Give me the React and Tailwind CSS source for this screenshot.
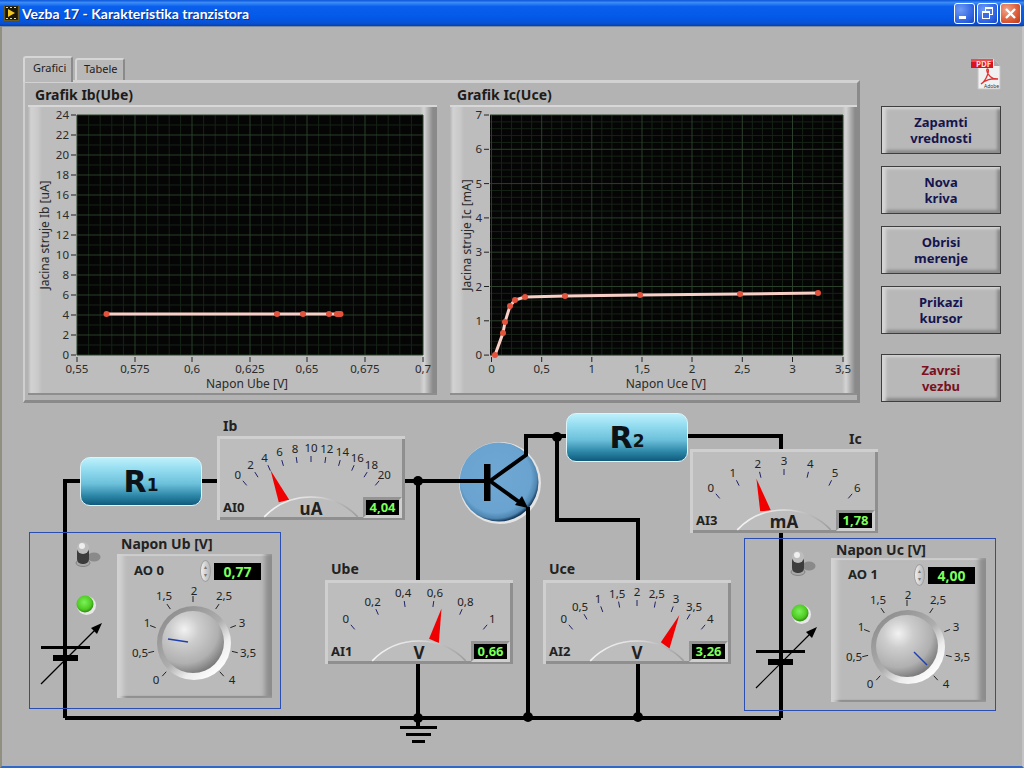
const GRID_MAJOR = "#2b402b";
const GRID_MINOR = "#172317";

const buttons = [
  { lines: ["Zapamti", "vrednosti"] },
  { lines: ["Nova", "kriva"] },
  { lines: ["Obrisi", "merenje"] },
  { lines: ["Prikazi", "kursor"] },
];

const meters = [
  { cls: "left-[215px] top-[32px]", labels: ["0", "2", "4", "6", "8", "10", "12", "14", "16", "18", "20"], angle: -23.8, unit: "uA", name: "AI0", value: "4,04", id: "m0" },
  { cls: "left-[323px] top-[176px]", labels: ["0", "0,2", "0,4", "0,6", "0,8", "1"], angle: 13, unit: "V", name: "AI1", value: "0,66", id: "m1" },
  { cls: "left-[541px] top-[176px]", labels: ["0", "0,5", "1", "1,5", "2", "2,5", "3", "3,5", "4"], angle: 25, unit: "V", name: "AI2", value: "3,26", id: "m2" },
  { cls: "left-[688px] top-[45px]", labels: ["0", "1", "2", "3", "4", "5", "6"], angle: -16, unit: "mA", name: "AI3", value: "1,78", id: "m3" },
];

const knobLabels = [
  ["0", -37, 38], ["0,5", -53, 11], ["1", -46, -19], ["1,5", -29, -46], ["2", 1, -51],
  ["2,5", 31, -46], ["3", 49, -19], ["3,5", 55, 11], ["4", 39, 38],
];

function polar(cx, cy, r, deg) {
  const a = (deg * Math.PI) / 180;
  return [cx + r * Math.sin(a), cy - r * Math.cos(a)];
}

function TitleBar() {
  return (
    <div className="h-[26px] shrink-0 flex items-center pl-[4px] pr-[3px] bg-[linear-gradient(180deg,#0a55d8_0%,#3c8cf6_10%,#0a5fec_25%,#0258e8_70%,#0a50d0_90%,#063fb0_100%)]">
      <svg width="15" height="16" viewBox="0 0 15 16" className="shrink-0">
        <rect x="0.5" y="0.5" width="14" height="15" fill="#2a2410" stroke="#6b5a20" />
        <rect x="2" y="2" width="11" height="12" fill="#1a1608" />
        <path d="M4 4 L11 8 L4 12 Z" fill="#f2c81e" />
        <path d="M2 2h2v1H2zM6 2h2v1H6zM10 2h2v1h-2zM2 13h2v1H2zM6 13h2v1H6zM10 13h2v1h-2z" fill="#d8d8c0" />
      </svg>
      <span className="ml-[3px] text-white font-bold text-[14px] font-['Lato',sans-serif] [text-shadow:1px_1px_0_#0a2f90]">
        Vezba 17 - Karakteristika tranzistora
      </span>
      <div className="ml-auto flex gap-[2px]">
        <div className="w-[21px] h-[21px] rounded-[3px] border border-white bg-[radial-gradient(circle_at_30%_30%,#6f9cf5,#2a5fe0_70%,#1c46b8)] flex items-end pl-[4px] pb-[4px]">
          <div className="w-[7px] h-[3px] bg-white" />
        </div>
        <div className="w-[21px] h-[21px] rounded-[3px] border border-white bg-[radial-gradient(circle_at_30%_30%,#6f9cf5,#2a5fe0_70%,#1c46b8)] relative">
          <div className="absolute left-[7px] top-[3px] w-[8px] h-[8px] border border-white border-t-2" />
          <div className="absolute left-[4px] top-[7px] w-[8px] h-[8px] border border-white border-t-2 bg-[#3a6ce4]" />
        </div>
        <div className="w-[21px] h-[21px] rounded-[3px] border border-white bg-[radial-gradient(circle_at_30%_30%,#f0a48a,#dc5a36_60%,#b83a1a)] flex items-center justify-center">
          <svg width="13" height="13" viewBox="0 0 13 13">
            <path d="M2 2 L11 11 M11 2 L2 11" stroke="#fff" strokeWidth="2.4" />
          </svg>
        </div>
      </div>
    </div>
  );
}

function Graph({ title, ylabel, xlabel, box, plot, xTicks, yTicks, minorX, minorY, points, cx, width }) {
  const [px0, py0, px1, py1] = plot;
  const vLines = [];
  const hLines = [];
  for (let i = 0; i < xTicks.length - 1; i++) {
    for (let j = 1; j < minorX; j++) {
      vLines.push(xTicks[i][1] + ((xTicks[i + 1][1] - xTicks[i][1]) * j) / minorX);
    }
  }
  for (let i = 0; i < yTicks.length - 1; i++) {
    for (let j = 1; j < minorY; j++) {
      hLines.push(yTicks[i][1] + ((yTicks[i + 1][1] - yTicks[i][1]) * j) / minorY);
    }
  }
  return (
    <div className={"flex flex-col shrink-0 " + width}>
      <div className="h-[22px] flex items-center pl-[7px] pt-[2px] text-[14px] font-bold text-[#1c1c1c] leading-none">{title}</div>
      <div className="h-[290px] overflow-hidden bg-[linear-gradient(90deg,#b4b4b4_0,#d2d2d2_3px,#c9c9c9_10px,#bdbdbd_14px,#bdbdbd_392px,#d4d4d4_396px,#8a8a8a_405px,#8a8a8a_409px)] border-t-2 border-t-[#d8d8d8] border-b-2 border-b-[#8e8e8e]">
        <svg width="409" height="286" viewBox={box} className="block">
          <rect x={px0} y={py0} width={px1 - px0} height={py1 - py0} fill="#050505" />
          {vLines.map((x, i) => <line key={i} x1={x} x2={x} y1={py0} y2={py1} stroke={GRID_MINOR} />)}
          {hLines.map((y, i) => <line key={i} x1={px0} x2={px1} y1={y} y2={y} stroke={GRID_MINOR} />)}
          {xTicks.map(([label, x]) => (
            <g key={label}>
              <line x1={x} x2={x} y1={py0} y2={py1} stroke={GRID_MAJOR} />
              <line x1={x} x2={x} y1={py1 + 2} y2={py1 + 7} stroke="#222" />
              <text x={x} y={py1 + 18} textAnchor="middle" fontSize="11.5" fill="#2a2a2a">{label}</text>
            </g>
          ))}
          {yTicks.map(([label, y]) => (
            <g key={label}>
              <line x1={px0} x2={px1} y1={y} y2={y} stroke={GRID_MAJOR} />
              <line x1={px0 - 6} x2={px0 - 1} y1={y} y2={y} stroke="#222" />
              <text x={px0 - 8} y={y + 4} textAnchor="end" fontSize="11.5" fill="#2a2a2a">{label}</text>
            </g>
          ))}
          <text x={cx} y={py1 + 33} textAnchor="middle" fontSize="12" fill="#2a2a2a">{xlabel}</text>
          <text transform={`translate(${box.split(" ")[0] * 1 + 21} 235) rotate(-90)`} textAnchor="middle" fontSize="12" fill="#2a2a2a">{ylabel}</text>
          <polyline points={points.map((p) => p.join(",")).join(" ")} fill="none" stroke="#f8cfc6" strokeWidth="3" />
          {points.map(([x, y], i) => <circle key={i} cx={x} cy={y} r="3" fill="#e2523c" />)}
        </svg>
      </div>
    </div>
  );
}

function Meter({ cls, labels, angle, unit, name, value, id }) {
  const cx = 94;
  const cy = 126;
  const n = labels.length - 1;
  const [tx, ty] = polar(cx, cy, 100, angle);
  const [b1x, b1y] = polar(cx, cy, 68, angle - 4.5);
  const [b2x, b2y] = polar(cx, cy, 66, angle + 4.5);
  const [ax, ay] = polar(cx, cy, 65, -46);
  const [bx, by] = polar(cx, cy, 65, 46);
  return (
    <div className={"absolute w-[188px] h-[84px] bg-[#bdbdbd] shadow-[inset_3px_3px_0_#cfcfcf,inset_-3px_-3px_0_#8f8f8f] " + cls}>
      <svg width="188" height="84" viewBox="0 0 188 84" className="absolute left-0 top-0">
        <defs>
          <linearGradient id={id} x1="0" x2="1" y1="0" y2="0">
            <stop offset="0" stopColor="#f4f4f4" />
            <stop offset="0.5" stopColor="#dedede" />
            <stop offset="1" stopColor="#9c9c9c" />
          </linearGradient>
        </defs>
        {labels.map((label, i) => {
          const deg = -40 + (80 * i) / n;
          const [x1, y1] = polar(cx, cy, 100, deg);
          const [x2, y2] = polar(cx, cy, 106, deg);
          const [lx, ly] = polar(cx, cy, 114, deg);
          return (
            <g key={label}>
              <line x1={x1} y1={y1} x2={x2} y2={y2} stroke="#1f2266" />
              <text x={lx} y={ly + 4} textAnchor="middle" fontSize="11.5" fill="#222">{label}</text>
            </g>
          );
        })}
        <polygon points={`${tx},${ty} ${b1x},${b1y} ${b2x},${b2y}`} fill="#f00000" />
        <path d={`M${ax} ${ay} A65 65 0 0 1 ${bx} ${by}`} fill="none" stroke={`url(#${id})`} strokeWidth="1.6" />
        <text x="6" y="76" fontSize="13" fontWeight="700" fill="#222">{name}</text>
        <text x={cx} y="79" textAnchor="middle" fontSize="17" fontWeight="700" fill="#222">{unit}</text>
      </svg>
      <div className="absolute left-[146px] top-[61px] w-[39px] h-[21px] border-[3px] border-t-[#949494] border-l-[#949494] border-r-[#cfcfcf] border-b-[#cfcfcf] bg-black flex items-center justify-center text-[#7dff5a] text-[13px] font-bold leading-none">
        {value}
      </div>
    </div>
  );
}

function Knob({ cls, name, value, pointer, id }) {
  const cx = 76;
  const cy = 88;
  return (
    <div className={"absolute w-[155px] h-[144px] bg-[#bababa] shadow-[inset_8px_0_5px_-2px_#d2d2d2,inset_-9px_0_5px_-2px_#8d8d8d,inset_0_3px_1px_-1px_#d6d6d6,inset_0_-3px_1px_-1px_#858585] " + cls}>
      <span className="absolute left-[17px] top-[7px] text-[13px] font-bold text-[#222] leading-[18px]">{name}</span>
      <div className="absolute left-[83px] top-[6px] w-[11px] h-[22px] rounded-[50%] bg-[linear-gradient(90deg,#efefef,#b5b5b5)] border border-[#a0a0a0] flex flex-col items-center justify-center text-[6px] leading-[8px] text-[#777]">
        <span>▴</span>
        <span>▾</span>
      </div>
      <div className="absolute left-[97px] top-[9px] w-[47px] h-[17px] bg-black flex items-center justify-center text-[#7dff5a] text-[14px] font-bold leading-none">
        {value}
      </div>
      <svg width="155" height="144" viewBox="0 0 155 144" className="absolute left-0 top-[0px] pointer-events-none">
        <defs>
          <linearGradient id={id + "r"} x1="0.15" y1="0.1" x2="0.85" y2="0.9">
            <stop offset="0" stopColor="#8f8f8f" />
            <stop offset="0.5" stopColor="#adadad" />
            <stop offset="0.75" stopColor="#ececec" />
            <stop offset="1" stopColor="#ffffff" />
          </linearGradient>
          <radialGradient id={id + "b"} cx="0.36" cy="0.3" r="0.78">
            <stop offset="0" stopColor="#f2f2f2" />
            <stop offset="0.3" stopColor="#cdcdcd" />
            <stop offset="0.7" stopColor="#b0b0b0" />
            <stop offset="1" stopColor="#6d6d6d" />
          </radialGradient>
        </defs>
        {knobLabels.map(([label, dx, dy], i) => {
          const deg = -138 + i * 34.5;
          const [x1, y1] = polar(cx, cy, 40, deg);
          const [x2, y2] = polar(cx, cy, 46, deg);
          return (
            <g key={label}>
              <line x1={x1} y1={y1} x2={x2} y2={y2} stroke="#222" />
              <text x={cx + dx} y={cy + dy + 4} textAnchor="middle" fontSize="11.5" fill="#222">{label}</text>
            </g>
          );
        })}
        <circle cx={cx + 1} cy={cy + 1} r="37" fill={`url(#${id}r)`} />
        <circle cx={cx} cy={cy} r="31" fill={`url(#${id}b)`} />
        <line x1={pointer[0]} y1={pointer[1]} x2={pointer[2]} y2={pointer[3]} stroke="#1f3fb0" strokeWidth="1.4" />
      </svg>
    </div>
  );
}

function Toggle({ cls }) {
  return (
    <svg width="30" height="27" viewBox="0 0 30 27" className={"absolute " + cls}>
      <ellipse cx="21" cy="16" rx="6.5" ry="4.5" fill="#8a8a8a" />
      <ellipse cx="10" cy="22" rx="7" ry="3.5" fill="#a8a8a8" stroke="#6a6a6a" strokeWidth="0.6" />
      <rect x="4" y="6" width="12" height="17" rx="5" fill="#3c3c3c" />
      <ellipse cx="10" cy="7" rx="6" ry="6" fill="#bdbdbd" />
      <ellipse cx="9" cy="5" rx="3" ry="3" fill="#efefef" />
    </svg>
  );
}

function Led({ cls, id }) {
  return (
    <svg width="22" height="22" viewBox="0 0 22 22" className={"absolute " + cls}>
      <defs>
        <radialGradient id={id} cx="0.45" cy="0.4" r="0.6">
          <stop offset="0" stopColor="#7cf25a" />
          <stop offset="0.7" stopColor="#4ecb22" />
          <stop offset="1" stopColor="#2f8a14" />
        </radialGradient>
      </defs>
      <circle cx="11.5" cy="11.5" r="9.5" fill="#e8e8e8" />
      <circle cx="10" cy="10" r="8.5" fill={`url(#${id})`} />
    </svg>
  );
}

function Resistor({ cls, sub }) {
  return (
    <div className={"absolute w-[122px] h-[49px] rounded-[10px] border border-[#dff4f8] bg-[linear-gradient(180deg,#bdf0fb_0%,#93dcf0_25%,#6cc0da_55%,#2d87a8_80%,#0f5a7c_100%)] flex items-center justify-center text-[#0c1216] font-bold leading-none font-['DejaVu_Sans',sans-serif] " + cls}>
      <span className="text-[30px]">R</span>
      <span className="text-[17px] mt-[7px]">{sub}</span>
    </div>
  );
}

function Wires() {
  return (
    <svg width="1024" height="362" viewBox="2 404 1024 362" className="absolute left-0 top-0">
      <defs>
        <radialGradient id="trans" cx="0.46" cy="0.44" r="0.56">
          <stop offset="0" stopColor="#70a8d4" />
          <stop offset="0.8" stopColor="#6aa3cf" />
          <stop offset="0.93" stopColor="#4f86b2" />
          <stop offset="1" stopColor="#173a5c" />
        </radialGradient>
      </defs>
      {/* transistor body */}
      <circle cx="500" cy="483" r="41" fill="#e4e4e4" />
      <circle cx="499" cy="482" r="39.5" fill="url(#trans)" />
      <g fill="none" stroke="#000" strokeWidth="4">
        <path d="M65 718 V481 H82" />
        <path d="M200 481 H218" />
        <path d="M404 481 H490" />
        <path d="M418 481 V581" />
        <path d="M418 662 V727" />
        <path d="M65 718 H781" />
        <path d="M490 481 L526 455 V436 H568" />
        <path d="M490 481 L522 504" />
        <path d="M528 507 V718" />
        <path d="M557 436 V520 H638 V581" />
        <path d="M638 662 V718" />
        <path d="M686 436 H781 V450" />
        <path d="M781 532 V718" />
      </g>
      <rect x="484" y="464" width="6.5" height="37" fill="#000" />
      <polygon points="528,508 515,505 522,496" fill="#000" />
      {[[418, 481], [557, 437], [418, 718], [528, 717], [638, 717]].map(([x, y]) => (
        <circle key={x + "-" + y} cx={x} cy={y} r="5" fill="#000" />
      ))}
      {/* ground */}
      <rect x="400" y="726" width="37" height="3" fill="#000" />
      <rect x="406" y="733" width="25" height="3" fill="#000" />
      <rect x="412" y="740" width="13" height="3" fill="#000" />
      {/* batteries */}
      <g>
        <rect x="41" y="646" width="49" height="3" fill="#000" />
        <rect x="53" y="655" width="25" height="6" fill="#000" />
        <line x1="41" y1="684" x2="96" y2="629" stroke="#000" strokeWidth="1.2" />
        <polygon points="102,623 91,628 97,634" fill="#000" />
      </g>
      <g>
        <rect x="756" y="650" width="49" height="3" fill="#000" />
        <rect x="768" y="659" width="25" height="6" fill="#000" />
        <line x1="756" y1="688" x2="811" y2="633" stroke="#000" strokeWidth="1.2" />
        <polygon points="817,627 806,632 812,638" fill="#000" />
      </g>
    </svg>
  );
}

function PdfIcon() {
  return (
    <svg width="30" height="34" viewBox="0 0 30 34" className="block">
      <path d="M7 2 H23 L29 9 V32 H7 Z" fill="#f1f1f1" stroke="#c4c4c4" />
      <path d="M23 2 V9 H29 Z" fill="#a9a9a9" />
      <rect x="0" y="2" width="22" height="9" fill="#d8121e" />
      <rect x="0" y="2" width="22" height="3" fill="#ef4a50" />
      <text x="5" y="10" fontSize="8" fontWeight="700" fill="#f8dcdc">PDF</text>
      <path d="M10 27 C16 23 19 12 16.5 12 C14 12 18 23 27 22 C21 21 14 23 10 27 Z" fill="none" stroke="#d33" strokeWidth="1.3" />
      <text x="13" y="31" fontSize="5" fill="#333">Adobe</text>
    </svg>
  );
}

const ib = (x) => [x, 314];

export default function App() {
  return (
    <div className="w-[1024px] h-[768px] flex flex-col overflow-hidden bg-[#b3b3b3] font-['Noto_Sans',sans-serif]">
      <TitleBar />
      <div className="flex-1 flex flex-col border-l-2 border-l-[#8f9080] border-r-2 border-r-[#c4c4c4] border-b-2 border-b-[#2f68c8] border-t border-t-[#7c8ca0] min-h-0">
        {/* graphs and the button column */}
        <div className="h-[377px] shrink-0 flex pl-[21px] pt-[29px]">
          <div className="w-[837px] flex flex-col">
            <div className="flex h-[24px] items-end gap-[2px]">
              <div className="w-[50px] h-[26px] -mb-[2px] z-10 rounded-t-[3px] bg-[#b8b8b8] border-t-2 border-l-2 border-t-[#d6d6d6] border-l-[#d6d6d6] border-r-2 border-r-[#8a8a8a] pl-[8px] pt-[2px] text-[11px] text-[#222]">
                Grafici
              </div>
              <div className="w-[50px] h-[22px] rounded-t-[3px] bg-[#b8b8b8] border-t-2 border-l-2 border-t-[#d6d6d6] border-l-[#d6d6d6] border-r-2 border-r-[#8a8a8a] pl-[7px] pt-[1px] text-[11px] text-[#222]">
                Tabele
              </div>
            </div>
            <div className="h-[323px] flex gap-[13px] pl-[3px] border-t-[3px] border-t-[#d2d2d2] border-l-2 border-l-[#cfcfcf] border-r-[3px] border-r-[#8a8a8a] border-b-[3px] border-b-[#8a8a8a]">
              <Graph
                title="Grafik Ib(Ube)"
                ylabel="Jacina struje Ib [uA]"
                xlabel="Napon Ube [V]"
                box="28 107 409 286"
                plot={[77, 115, 423, 355]}
                cx={247}
                width="w-[409px]"
                xTicks={[["0,55", 77], ["0,575", 135], ["0,6", 192], ["0,625", 250], ["0,65", 307], ["0,675", 365], ["0,7", 423]]}
                yTicks={[24, 22, 20, 18, 16, 14, 12, 10, 8, 6, 4, 2, 0].map((v, i) => [String(v), 115 + i * 20])}
                minorX={5}
                minorY={2}
                points={[ib(106.5), ib(277), ib(303), ib(329), ib(337), ib(339), ib(340.5)]}
              />
              <Graph
                title="Grafik Ic(Uce)"
                ylabel="Jacina struje Ic [mA]"
                xlabel="Napon Uce [V]"
                box="450 107 409 286"
                plot={[490, 115, 843, 355]}
                cx={666}
                width="w-[407px]"
                xTicks={[["0", 491.5], ["0,5", 541.7], ["1", 591.8], ["1,5", 642], ["2", 692], ["2,5", 742.3], ["3", 792.5], ["3,5", 843]]}
                yTicks={[7, 6, 5, 4, 3, 2, 1, 0].map((v, i) => [String(v), 115 + i * 34.3])}
                minorX={5}
                minorY={5}
                points={[[495, 355], [503, 333], [505, 322], [510, 306], [515, 300], [525, 297], [565, 296], [640, 295], [740, 294], [818, 293]]}
              />
            </div>
          </div>
          <div className="flex-1 flex flex-col items-start pl-[21px]">
            <div className="h-[50px] w-[120px] flex justify-end pt-[1px]">
              <PdfIcon />
            </div>
            <div className="flex flex-col gap-[12px]">
              {buttons.map((b) => (
                <ActionButton key={b.lines[0]} lines={b.lines} color="text-[#14144f]" />
              ))}
              <div className="mt-[8px]">
                <ActionButton lines={["Zavrsi", "vezbu"]} color="text-[#7a1020]" />
              </div>
            </div>
          </div>
        </div>

        {/* circuit canvas */}
        <div className="relative flex-1">
          <Wires />
          <div className="absolute left-[27px] top-[128px] w-[252px] h-[177px] border border-[#2a4fb0]" />
          <div className="absolute left-[742px] top-[134px] w-[252px] h-[173px] border border-[#2a4fb0]" />
          <Resistor cls="left-[78px] top-[53px]" sub="1" />
          <Resistor cls="left-[564px] top-[9px]" sub="2" />
          {meters.map((m) => (
            <Meter key={m.id} {...m} />
          ))}
          <span className="absolute left-[221px] top-[13px] text-[14px] font-bold text-[#222] leading-[18px]">Ib</span>
          <span className="absolute left-[329px] top-[156px] text-[14px] font-bold text-[#222] leading-[18px]">Ube</span>
          <span className="absolute left-[547px] top-[156px] text-[14px] font-bold text-[#222] leading-[18px]">Uce</span>
          <span className="absolute left-[847px] top-[26px] text-[14px] font-bold text-[#222] leading-[18px]">Ic</span>
          <span className="absolute left-[119px] top-[131px] text-[14px] font-bold text-[#222] leading-[18px]">Napon Ub [V]</span>
          <span className="absolute left-[834px] top-[137px] text-[14px] font-bold text-[#222] leading-[18px]">Napon Uc [V]</span>
          <Toggle cls="left-[71px] top-[137px]" />
          <Led cls="left-[73px] top-[190px]" id="led0" />
          <Knob cls="left-[115px] top-[150px]" name="AO 0" value="0,77" pointer={[51, 85, 71, 88]} id="k0" />
          <Toggle cls="left-[786px] top-[146px]" />
          <Led cls="left-[788px] top-[199px]" id="led1" />
          <Knob cls="left-[829px] top-[154px]" name="AO 1" value="4,00" pointer={[83, 94, 96, 107]} id="k1" />
        </div>
      </div>
    </div>
  );
}

function ActionButton({ lines, color }) {
  return (
    <button className={"block w-[120px] h-[48px] border border-[#3e3e3e] bg-[#b8b8b8] shadow-[inset_5px_3px_3px_-1px_#d4d4d4,inset_-4px_-4px_3px_-1px_#8a8a8a] text-[13px] font-bold leading-[16px] text-center " + color}>
      {lines[0]}
      <br />
      {lines[1]}
    </button>
  );
}
